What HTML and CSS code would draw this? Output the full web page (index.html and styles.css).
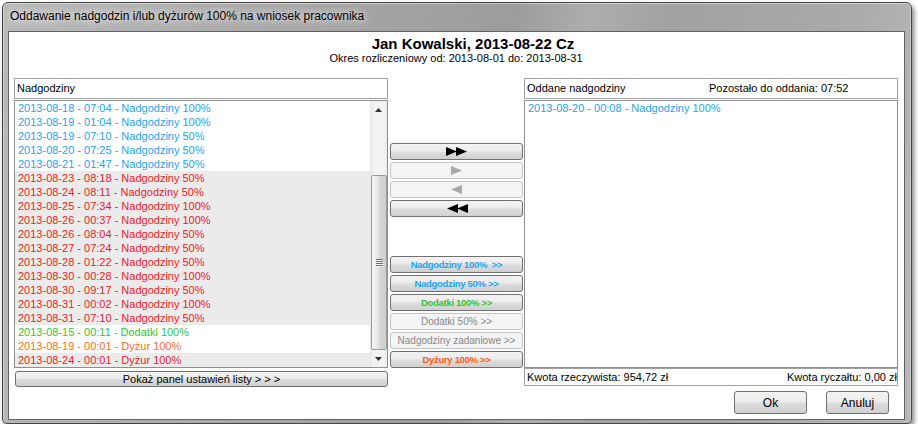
FILE: index.html
```html
<!DOCTYPE html>
<html lang="pl">
<head>
<meta charset="utf-8">
<title>Oddawanie nadgodzin</title>
<link rel="stylesheet" href="styles.css">
</head>
<body>
<div class="window">
  <div class="titlebar"><span class="ttext">Oddawanie nadgodzin i/lub dyżurów 100% na wniosek pracownika</span></div>
  <div class="client">
    <div class="head">
      <div class="name">Jan Kowalski, 2013-08-22 Cz</div>
      <div class="period">Okres rozliczeniowy od: 2013-08-01 do: 2013-08-31</div>
    </div>
    <div class="main">
      <div class="col left">
        <div class="phead">Nadgodziny</div>
        <div class="list">
          <div class="rows">
            <div class="row b">2013-08-18 - 07:04 - Nadgodziny 100%</div>
            <div class="row b">2013-08-19 - 01:04 - Nadgodziny 100%</div>
            <div class="row b">2013-08-19 - 07:10 - Nadgodziny 50%</div>
            <div class="row b">2013-08-20 - 07:25 - Nadgodziny 50%</div>
            <div class="row b">2013-08-21 - 01:47 - Nadgodziny 50%</div>
            <div class="row r g">2013-08-23 - 08:18 - Nadgodziny 50%</div>
            <div class="row r g">2013-08-24 - 08:11 - Nadgodziny 50%</div>
            <div class="row r g">2013-08-25 - 07:34 - Nadgodziny 100%</div>
            <div class="row r g">2013-08-26 - 00:37 - Nadgodziny 100%</div>
            <div class="row r g">2013-08-26 - 08:04 - Nadgodziny 50%</div>
            <div class="row r g">2013-08-27 - 07:24 - Nadgodziny 50%</div>
            <div class="row r g">2013-08-28 - 01:22 - Nadgodziny 50%</div>
            <div class="row r g">2013-08-30 - 00:28 - Nadgodziny 100%</div>
            <div class="row r g">2013-08-30 - 09:17 - Nadgodziny 50%</div>
            <div class="row r g">2013-08-31 - 00:02 - Nadgodziny 100%</div>
            <div class="row r g">2013-08-31 - 07:10 - Nadgodziny 50%</div>
            <div class="row gr">2013-08-15 - 00:11 - Dodatki 100%</div>
            <div class="row o">2013-08-19 - 00:01 - Dyżur 100%</div>
            <div class="row r g">2013-08-24 - 00:01 - Dyżur 100%</div>
          </div>
          <div class="scroll">
            <div class="sb-btn"><svg width="7" height="4" viewBox="0 0 7 4"><polygon points="0,4 3.5,0 7,4" fill="#333"/></svg></div>
            <div class="sb-track">
              <div class="thumb"><div class="grip"><i></i><i></i><i></i><i></i></div></div>
            </div>
            <div class="sb-btn"><svg width="7" height="4" viewBox="0 0 7 4"><polygon points="0,0 3.5,4 7,0" fill="#333"/></svg></div>
          </div>
        </div>
        <div class="btn wide">Pokaż panel ustawień listy &gt; &gt; &gt;</div>
      </div>
      <div class="col mid">
        <div class="grp">
          <div class="btn ab"><svg width="22" height="9" viewBox="0 0 22 9"><polygon points="0,0 11,4.5 0,9" fill="#000"/><polygon points="10,0 21,4.5 10,9" fill="#000"/></svg></div>
          <div class="btn ab dis"><svg width="11" height="9" viewBox="0 0 11 9"><polygon points="0,0 11,4.5 0,9" fill="#a8a8a8"/></svg></div>
          <div class="btn ab dis"><svg width="11" height="9" viewBox="0 0 11 9"><polygon points="11,0 0,4.5 11,9" fill="#a8a8a8"/></svg></div>
          <div class="btn ab"><svg width="22" height="9" viewBox="0 0 22 9"><polygon points="22,0 11,4.5 22,9" fill="#000"/><polygon points="12,0 1,4.5 12,9" fill="#000"/></svg></div>
        </div>
        <div class="grp grp2">
          <div class="btn ab tb cb">Nadgodziny 100% &nbsp;&gt;&gt;</div>
          <div class="btn ab tb cb">Nadgodziny 50% &gt;&gt;</div>
          <div class="btn ab tb cg">Dodatki 100% &gt;&gt;</div>
          <div class="btn ab dis td">Dodatki 50% &gt;&gt;</div>
          <div class="btn ab dis td">Nadgodziny zadaniowe &gt;&gt;</div>
          <div class="btn ab tb co">Dyżury 100% &gt;&gt;</div>
        </div>
      </div>
      <div class="col right">
        <div class="phead split"><span class="h1">Oddane nadgodziny</span><span>Pozostało do oddania: 07:52</span></div>
        <div class="list rlist">
          <div class="rows">
            <div class="row b">2013-08-20 - 00:08 - Nadgodziny 100%</div>
          </div>
        </div>
        <div class="foot"><span>Kwota rzeczywista: 954,72 zł</span><span>Kwota ryczałtu: 0,00 zł</span></div>
        <div class="actions">
          <div class="btn big ok">Ok</div>
          <div class="btn big cancel">Anuluj</div>
        </div>
      </div>
    </div>
  </div>
</div>
</body>
</html>
```
FILE: styles.css
```css
* { box-sizing: border-box; }
body {
  margin: 0;
  background: #fff;
  font-family: "Liberation Sans", Arial, sans-serif;
  font-size: 11px;
  color: #000;
}
.window {
  margin: 2px 0 0 2px;
  width: 910px;
  height: 422px;
  border: 1px solid #454545;
  border-radius: 6px 6px 5px 5px;
  padding: 0 6px 3px 5px;
  background: linear-gradient(100deg, #bababa 0%, #a8a8a8 30%, #9c9c9c 52%, #adadad 60%, #a2a2a2 68%, #a9a9a9 85%, #b9b9b9 100%);
  box-shadow: inset 0 1px 0 rgba(255,255,255,.45), inset 1px 0 0 rgba(255,255,255,.3), inset -1px 0 0 rgba(255,255,255,.3), 2px 3px 5px rgba(0,0,0,.5);
  display: flex;
  flex-direction: column;
}
.titlebar {
  height: 28px;
  line-height: 26px;
  padding-left: 2px;
  font-size: 12px;
  white-space: nowrap;
}
.ttext {
  text-shadow: 0 0 6px rgba(255,255,255,.9), 0 0 10px rgba(255,255,255,.6);
}
.client {
  flex: 1;
  background: #fff;
  border: 1px solid #626262;
  padding: 0 6px 0 5px;
  display: flex;
  flex-direction: column;
}
.head {
  height: 46px;
  padding-top: 4px;
  text-align: center;
}
.name {
  font-size: 15px;
  font-weight: bold;
  line-height: 16px;
  padding-left: 34px;
}
.period {
  font-size: 11px;
  line-height: 12px;
}
.main {
  flex: 1;
  display: flex;
}
.col { display: flex; flex-direction: column; }
.left { width: 374px; margin-right: 2px; }
.mid { width: 133px; margin-right: 1px; padding-top: 65px; }
.right { width: 374px; }

.phead {
  height: 21px;
  border: 1px solid #a0a0a0;
  padding-left: 2px;
  line-height: 19px;
  white-space: nowrap;
}
.phead.split { display: flex; }
.phead .h1 { width: 182px; }

.list {
  margin-top: 1px;
  height: 268px;
  border: 1px solid #8f8f8f;
  display: flex;
  overflow: hidden;
}
.rows { flex: 1; overflow: hidden; }
.row {
  height: 14px;
  line-height: 14px;
  padding-left: 3px;
  white-space: nowrap;
}
.row.g { background: #ebebeb; }
.b { color: #22a4ee; }
.r { color: #ee1a26; }
.gr { color: #35c435; }
.o { color: #ff6c1a; }

.scroll {
  width: 17px;
  background: linear-gradient(to right, #e6e6e6, #f2f2f2 20%, #f4f4f4 80%, #e9e9e9);
  display: flex;
  flex-direction: column;
}
.sb-btn {
  height: 17px;
  display: flex;
  align-items: center;
  justify-content: center;
}
.sb-track {
  flex: 1;
  padding-top: 57px;
}
.thumb {
  height: 175px;
  margin-left: 1px;
  border: 1px solid #9b9b9b;
  border-radius: 2px;
  background: linear-gradient(to right, #f4f4f4, #e6e6e6 45%, #d6d6d6 55%, #cfcfcf);
  display: flex;
  align-items: center;
  justify-content: center;
}
.grip { display: flex; flex-direction: column; gap: 1px; }
.grip i {
  display: block;
  width: 7px;
  height: 1px;
  background: #6b6b6b;
  box-shadow: 0 1px 0 #fafafa;
}

.btn {
  border: 1px solid #707070;
  border-radius: 3px;
  background: linear-gradient(#f3f3f3, #ebebeb 48%, #dddddd 52%, #d0d0d0);
  display: flex;
  align-items: center;
  justify-content: center;
  white-space: nowrap;
}
.btn.dis {
  border-color: #c2c4c6;
  background: #f4f4f4;
}
.wide {
  margin-top: 3px;
  margin-left: 1px;
  width: 373px;
  height: 16px;
  font-size: 11px;
}
.grp { display: flex; flex-direction: column; gap: 2px; }
.grp2 { margin-top: 39px; }
.ab { height: 17px; }
.tb { font-size: 9.5px; font-weight: bold; letter-spacing: -0.3px; }
.td { font-size: 10px; color: #878787; }
.cb { color: #22a4ee; }
.cg { color: #2fc42f; }
.co { color: #ff5a16; }

.rlist { height: 268px; }
.foot {
  height: 18px;
  border: 1px solid #a0a0a0;
  display: flex;
  justify-content: space-between;
  padding: 1px 0 0 2px;
  line-height: 15px;
  white-space: nowrap;
}
.actions {
  margin-top: 5px;
  display: flex;
  justify-content: flex-end;
  gap: 19px;
  padding-right: 9px;
}
.big { height: 23px; font-size: 12px; }
.ok { width: 73px; }
.cancel { width: 63px; }
```
